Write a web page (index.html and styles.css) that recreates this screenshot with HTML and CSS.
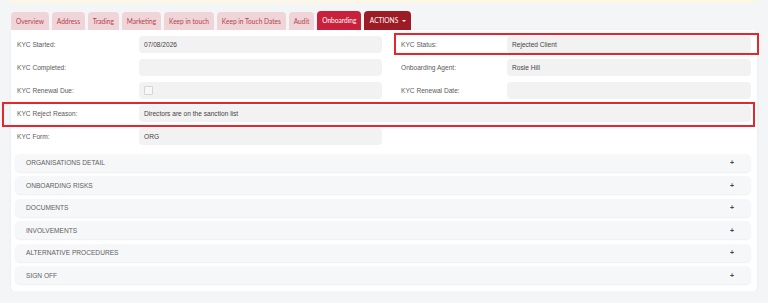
FILE: index.html
```html
<!DOCTYPE html>
<html lang="en">
<head>
    <meta charset="UTF-8">
    <meta name="viewport" content="width=device-width, initial-scale=1.0">
    <title>Onboarding</title>
    <link rel="stylesheet" href="styles.css">
</head>
<body>
    <div class="notice"></div>

    <div class="tabs">
        <div class="tab">Overview</div>
        <div class="tab">Address</div>
        <div class="tab">Trading</div>
        <div class="tab">Marketing</div>
        <div class="tab">Keep in touch</div>
        <div class="tab">Keep in Touch Dates</div>
        <div class="tab">Audit</div>
        <div class="tab active">Onboarding</div>
        <div class="tab actions">ACTIONS <span class="caret"></span></div>
    </div>

    <div class="card">
        <div class="form">
            <div class="row">
                <div class="field left">
                    <div class="label">KYC Started:</div>
                    <div class="input">07/08/2026</div>
                </div>
                <div class="field right flagged status-flag">
                    <div class="label">KYC Status:</div>
                    <div class="input">Rejected Client</div>
                </div>
            </div>
            <div class="row">
                <div class="field left">
                    <div class="label">KYC Completed:</div>
                    <div class="input"></div>
                </div>
                <div class="field right">
                    <div class="label">Onboarding Agent:</div>
                    <div class="input">Rosie Hill</div>
                </div>
            </div>
            <div class="row">
                <div class="field left">
                    <div class="label">KYC Renewal Due:</div>
                    <div class="input"><span class="checkbox"></span></div>
                </div>
                <div class="field right">
                    <div class="label">KYC Renewal Date:</div>
                    <div class="input"></div>
                </div>
            </div>
            <div class="row">
                <div class="field wide flagged reason-flag">
                    <div class="label">KYC Reject Reason:</div>
                    <div class="input">Directors are on the sanction list</div>
                </div>
            </div>
            <div class="row">
                <div class="field left">
                    <div class="label">KYC Form:</div>
                    <div class="input">ORG</div>
                </div>
            </div>
        </div>

        <div class="accordion">
            <div class="panel"><span>ORGANISATIONS DETAIL</span><span class="plus">+</span></div>
            <div class="panel"><span>ONBOARDING RISKS</span><span class="plus">+</span></div>
            <div class="panel"><span>DOCUMENTS</span><span class="plus">+</span></div>
            <div class="panel"><span>INVOLVEMENTS</span><span class="plus">+</span></div>
            <div class="panel"><span>ALTERNATIVE PROCEDURES</span><span class="plus">+</span></div>
            <div class="panel"><span>SIGN OFF</span><span class="plus">+</span></div>
        </div>
    </div>
</body>
</html>
```

FILE: styles.css
```css
body {
    margin: 0;
    background-color: #f4f5f7;
    font-family: "Liberation Sans", Arial, sans-serif;
    font-size: 6.6px;
    color: #5a5a5a;
}

.notice {
    height: 3px;
    margin: 0 11px 0 10px;
    background-color: #fcf6e4;
}

/* tab strip */
.tabs {
    display: flex;
    gap: 3px;
    margin: 8px 0 0 11px;
    align-items: flex-end;
}

.tab {
    height: 18px;
    line-height: 18px;
    padding: 0 4.9px;
    border-radius: 4px 4px 0 0;
    background-color: #f0d5d8;
    color: #b2424f;
    font-family: Lato, sans-serif;
    font-size: 6.6px;
}

.tab.active {
    height: 19px;
    line-height: 19px;
    background-color: #c9203b;
    color: #fff;
}

.tab.actions {
    height: 19px;
    line-height: 19px;
    background-color: #9c1b25;
    color: #fff;
    padding: 0 5px 0 5.5px;
}

.caret {
    display: inline-block;
    width: 0;
    height: 0;
    margin-left: 2px;
    vertical-align: 1px;
    border-left: 2.5px solid transparent;
    border-right: 2.5px solid transparent;
    border-top: 2.5px solid #fff;
}

/* main card */
.card {
    margin: 0 11px;
    padding: 6px 6px 7px 6px;
    background-color: #fff;
    border-radius: 0 4px 4px 4px;
    box-shadow: 0 1px 3px rgba(0, 0, 0, 0.06);
}

.form {
    display: flex;
    flex-direction: column;
    gap: 5.7px;
}

.row {
    display: flex;
}

.field {
    display: flex;
    align-items: center;
}

.label {
    width: 122px;
    flex-shrink: 0;
}

.field.right {
    margin-left: 19px;
}

.field.right .label {
    width: 106px;
}

.input {
    height: 17.2px;
    line-height: 17.2px;
    padding-left: 5px;
    box-sizing: border-box;
    background-color: #f2f2f2;
    border-radius: 4px;
    color: #444;
    display: flex;
    align-items: center;
}

.field.left .input {
    width: 243px;
}

.field.right .input {
    width: 244px;
}

.field.wide {
    flex: 1;
}

.field.wide .input {
    flex: 1;
}

.checkbox {
    width: 7px;
    height: 7px;
    border: 1px solid #d6d6d6;
    background-color: #f8f8f8;
    border-radius: 1px;
}

/* red review annotations */
.flagged {
    position: relative;
}

.flagged::after {
    content: "";
    position: absolute;
    border: 2px solid #e5262c;
    pointer-events: none;
}

.status-flag::after {
    left: -7px;
    right: -8px;
    top: -3px;
    bottom: -2px;
}

.reason-flag::after {
    left: -15px;
    right: -4px;
    top: -3px;
    bottom: -5px;
}

/* collapsible sections */
.accordion {
    display: flex;
    flex-direction: column;
    gap: 4.5px;
    margin: 9px 0 0 -2px;
}

.panel {
    height: 18px;
    display: flex;
    align-items: center;
    justify-content: space-between;
    padding: 0 17px 0 11px;
    background-color: #f6f7f9;
    border-radius: 5px;
    box-shadow: 0 1px 1.5px rgba(0, 0, 0, 0.07);
    color: #606060;
}

.plus {
    font-weight: bold;
    font-size: 7px;
    color: #444;
}
```
